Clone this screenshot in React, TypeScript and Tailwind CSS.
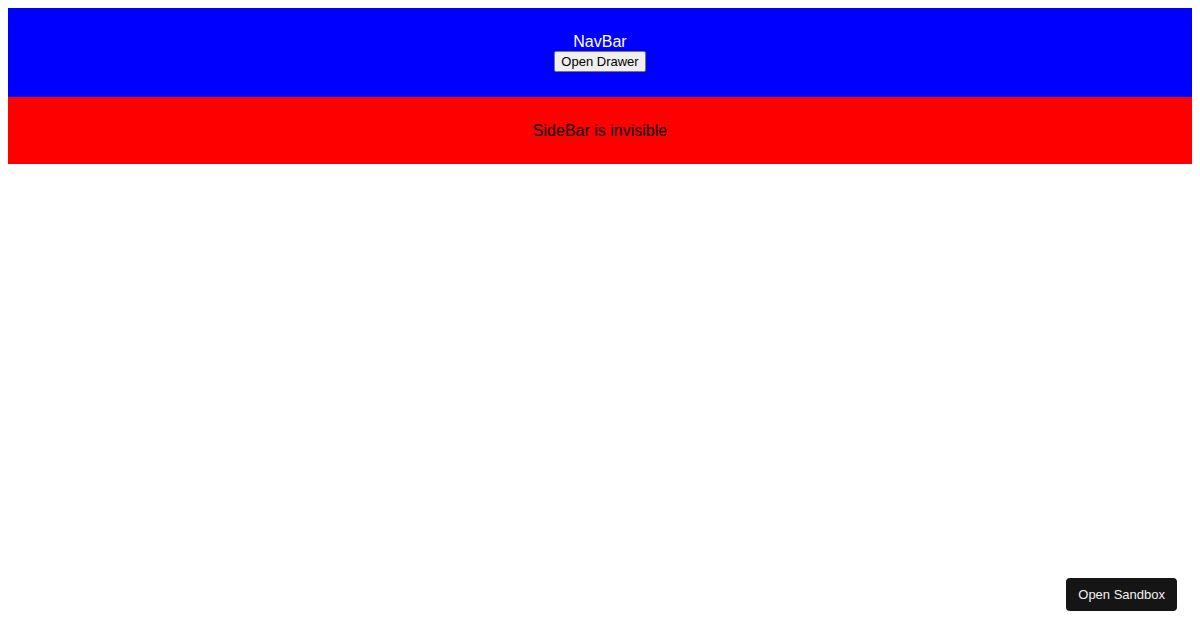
import React from 'react';

const NavBar = () => (
  <div className="bg-[#0000ff] text-white text-center pt-[25px] pb-[25px]">
    <div className="text-base leading-[18px]">NavBar</div>
    <button className="block mx-auto bg-[#efefef] text-black text-[13px] leading-[15px] border border-[#767676] rounded-[2px] px-[6px] py-[2px]">
      Open Drawer
    </button>
  </div>
);

const SideBar = () => (
  <div className="bg-[#ff0000] text-black text-center py-6 text-base leading-[19px]">
    SideBar is invisible
  </div>
);

export default function App() {
  return (
    <div className="min-h-[630px] bg-white p-2 font-['Liberation_Sans',Arial,sans-serif]">
      <NavBar />
      <SideBar />
      <button className="fixed right-[23px] bottom-[19px] whitespace-nowrap bg-[#151515] text-[#f2f2f2] text-[13px] rounded-[4px] px-[12px] h-[33px]">
        Open Sandbox
      </button>
    </div>
  );
}
